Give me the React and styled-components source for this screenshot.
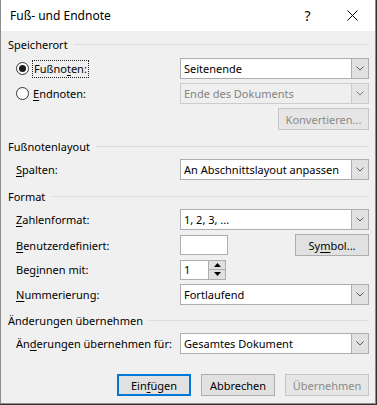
import React from 'react'
import styled, { createGlobalStyle } from 'styled-components'

const GlobalStyle = createGlobalStyle`
  html, body {
    margin: 0;
    padding: 0;
    background: #33342c;
  }
  body {
    font-family: "Noto Sans", "Open Sans", sans-serif;
    font-size: 11px;
    color: #000;
  }
`

const Window = styled.div`
  width: 376px;
  height: 404px;
  box-sizing: border-box;
  background: #f0f0f0;
  border: 1px solid #8c8c8c;
  border-top: none;
  display: flex;
  flex-direction: column;
`

const TitleBar = styled.div`
  height: 31px;
  background: #fff;
  display: flex;
  align-items: center;
  padding-left: 9px;
  flex-shrink: 0;
`

const Title = styled.div`
  flex: 1;
  font-size: 12px;
  padding-bottom: 1px;
`

const TitleButton = styled.div`
  width: 45px;
  height: 31px;
  display: flex;
  align-items: center;
  justify-content: center;
  font-size: 14px;
  font-family: "Noto Sans", sans-serif;
`

const Body = styled.div`
  padding: 0 6px 0 7px;
  display: flex;
  flex-direction: column;
`

const GroupHeader = styled.div`
  display: flex;
  align-items: center;
  height: 16px;
  margin-top: ${p => p.$mt}px;
  gap: 6px;
  &::after {
    content: '';
    flex: 1;
    height: 1px;
    background: #dcdcdc;
  }
`

const Row = styled.div`
  display: grid;
  grid-template-columns: 172px 1fr;
  align-items: center;
  height: ${p => p.$h || 21}px;
  margin-top: ${p => p.$mt}px;
`

const Label = styled.div`
  padding-left: 8px;
  white-space: nowrap;
  display: flex;
  align-items: center;
`

const RadioLabel = styled.div`
  padding-left: 8px;
  display: flex;
  align-items: center;
  gap: 4px;
`

const Radio = styled.span`
  width: 13px;
  height: 13px;
  box-sizing: border-box;
  border: 1px solid #333;
  border-radius: 50%;
  background: #fff;
  display: flex;
  align-items: center;
  justify-content: center;
  &::after {
    content: '';
    width: 7px;
    height: 7px;
    border-radius: 50%;
    background: ${p => (p.$checked ? '#1a1a1a' : 'transparent')};
  }
`

const Focus = styled.span`
  outline: 1px dotted #222;
  outline-offset: 0;
  padding: 1px 1px;
  line-height: 14px;
`

const Key = styled.span`
  text-decoration: underline;
  text-underline-offset: 2px;
`

const Combo = styled.div`
  height: 21px;
  box-sizing: border-box;
  border: 1px solid ${p => (p.$disabled ? '#cccccc' : '#adadad')};
  background: ${p => (p.$disabled ? '#efefef' : '#fff')};
  color: ${p => (p.$disabled ? '#838383' : '#000')};
  display: flex;
  align-items: stretch;
`

const ComboValue = styled.div`
  flex: 1;
  display: flex;
  align-items: center;
  padding-left: 3px;
  white-space: nowrap;
`

const ComboArrow = styled.div`
  width: 16px;
  background: ${p => (p.$disabled ? '#e5e5e5' : '#e1e1e1')};
  border-left: 1px solid ${p => (p.$disabled ? '#cccccc' : '#adadad')};
  display: flex;
  align-items: center;
  justify-content: center;
`

const Controls = styled.div`
  display: flex;
  align-items: center;
  justify-content: ${p => p.$justify || 'flex-start'};
`

const Button = styled.div`
  width: ${p => p.$w}px;
  height: 22px;
  box-sizing: border-box;
  display: flex;
  align-items: center;
  justify-content: center;
  background: ${p => (p.$disabled ? '#e6e6e6' : '#e1e1e1')};
  border: ${p =>
    p.$default ? '2px solid #0078d7' : p.$disabled ? '1px solid #c6c6c6' : '1px solid #adadad'};
  color: ${p => (p.$disabled ? '#8a8a8a' : '#000')};
  white-space: nowrap;
`

const TextBox = styled.div`
  width: ${p => p.$w}px;
  height: ${p => p.$h || 20}px;
  box-sizing: border-box;
  border: 1px solid #adadad;
  background: #fff;
  display: flex;
  align-items: center;
  padding-left: 3px;
`

const Spinner = styled.div`
  width: 46px;
  height: 20px;
  box-sizing: border-box;
  border: 1px solid #adadad;
  background: #fff;
  display: flex;
`

const SpinValue = styled.div`
  flex: 1;
  display: flex;
  align-items: center;
  padding-left: 3px;
`

const SpinButtons = styled.div`
  width: 16px;
  display: flex;
  flex-direction: column;
  border-left: 1px solid #adadad;
`

const SpinButton = styled.div`
  flex: 1;
  background: #e1e1e1;
  display: flex;
  align-items: center;
  justify-content: center;
  & + & {
    border-top: 1px solid #adadad;
  }
`

const Footer = styled.div`
  display: flex;
  justify-content: flex-end;
  gap: 10px;
  margin-top: 20px;
`

const Chevron = ({ color = '#444' }) => (
  <svg width="8" height="5" viewBox="0 0 8 5">
    <polyline points="0.5,0.5 4,4 7.5,0.5" fill="none" stroke={color} strokeWidth="1" />
  </svg>
)

const Triangle = ({ up }) => (
  <svg width="7" height="4" viewBox="0 0 7 4">
    <polygon points={up ? '0,4 3.5,0 7,4' : '0,0 3.5,4 7,0'} fill="#000" />
  </svg>
)

const Dropdown = ({ value, disabled }) => (
  <Combo $disabled={disabled}>
    <ComboValue>{value}</ComboValue>
    <ComboArrow $disabled={disabled}>
      <Chevron color={disabled ? '#777' : '#555'} />
    </ComboArrow>
  </Combo>
)

export default function App() {
  return (
    <>
      <GlobalStyle />
      <Window>
        <TitleBar>
          <Title>Fuß- und Endnote</Title>
          <TitleButton>?</TitleButton>
          <TitleButton>
            <svg width="11" height="11" viewBox="0 0 11 11">
              <path d="M0.5 0.5 L10.5 10.5 M10.5 0.5 L0.5 10.5" stroke="#000" strokeWidth="1" />
            </svg>
          </TitleButton>
        </TitleBar>
        <Body>
          <GroupHeader $mt={5}>Speicherort</GroupHeader>
          <Row $mt={6}>
            <RadioLabel>
              <Radio $checked />
              <Focus>
                Fußno<Key>t</Key>en:
              </Focus>
            </RadioLabel>
            <Dropdown value="Seitenende" />
          </Row>
          <Row $mt={4}>
            <RadioLabel>
              <Radio />
              <span>
                <Key>E</Key>ndnoten:
              </span>
            </RadioLabel>
            <Dropdown value="Ende des Dokuments" disabled />
          </Row>
          <Row $mt={4} $h={22}>
            <span />
            <Controls $justify="flex-end">
              <Button $w={91} $disabled>
                Konvertieren...
              </Button>
            </Controls>
          </Row>

          <GroupHeader $mt={8}>Fußnotenlayout</GroupHeader>
          <Row $mt={5}>
            <Label>
              <span>
                <Key>S</Key>palten:
              </span>
            </Label>
            <Dropdown value="An Abschnittslayout anpassen" />
          </Row>

          <GroupHeader $mt={8}>Format</GroupHeader>
          <Row $mt={5}>
            <Label>
              <span>
                <Key>Z</Key>ahlenformat:
              </span>
            </Label>
            <Dropdown value="1, 2, 3, ..." />
          </Row>
          <Row $mt={4}>
            <Label>
              <span>
                <Key>B</Key>enutzerdefiniert:
              </span>
            </Label>
            <Controls $justify="space-between">
              <TextBox $w={48} />
              <Button $w={74}>
                <span>
                  Sy<Key>m</Key>bol...
                </span>
              </Button>
            </Controls>
          </Row>
          <Row $mt={4}>
            <Label>
              <span>
                Beg<Key>i</Key>nnen mit:
              </span>
            </Label>
            <Controls>
              <Spinner>
                <SpinValue>1</SpinValue>
                <SpinButtons>
                  <SpinButton>
                    <Triangle up />
                  </SpinButton>
                  <SpinButton>
                    <Triangle />
                  </SpinButton>
                </SpinButtons>
              </Spinner>
            </Controls>
          </Row>
          <Row $mt={4}>
            <Label>
              <span>
                <Key>N</Key>ummerierung:
              </span>
            </Label>
            <Dropdown value="Fortlaufend" />
          </Row>

          <GroupHeader $mt={7}>Änderungen übernehmen</GroupHeader>
          <Row $mt={5}>
            <Label>
              <span>
                Än<Key>d</Key>erungen übernehmen für:
              </span>
            </Label>
            <Dropdown value="Gesamtes Dokument" />
          </Row>

          <Footer>
            <Button $w={74} $default>
              <span>
                Ein<Key>f</Key>ügen
              </span>
            </Button>
            <Button $w={74}>Abbrechen</Button>
            <Button $w={84} $disabled>
              Übernehmen
            </Button>
          </Footer>
        </Body>
      </Window>
    </>
  )
}
